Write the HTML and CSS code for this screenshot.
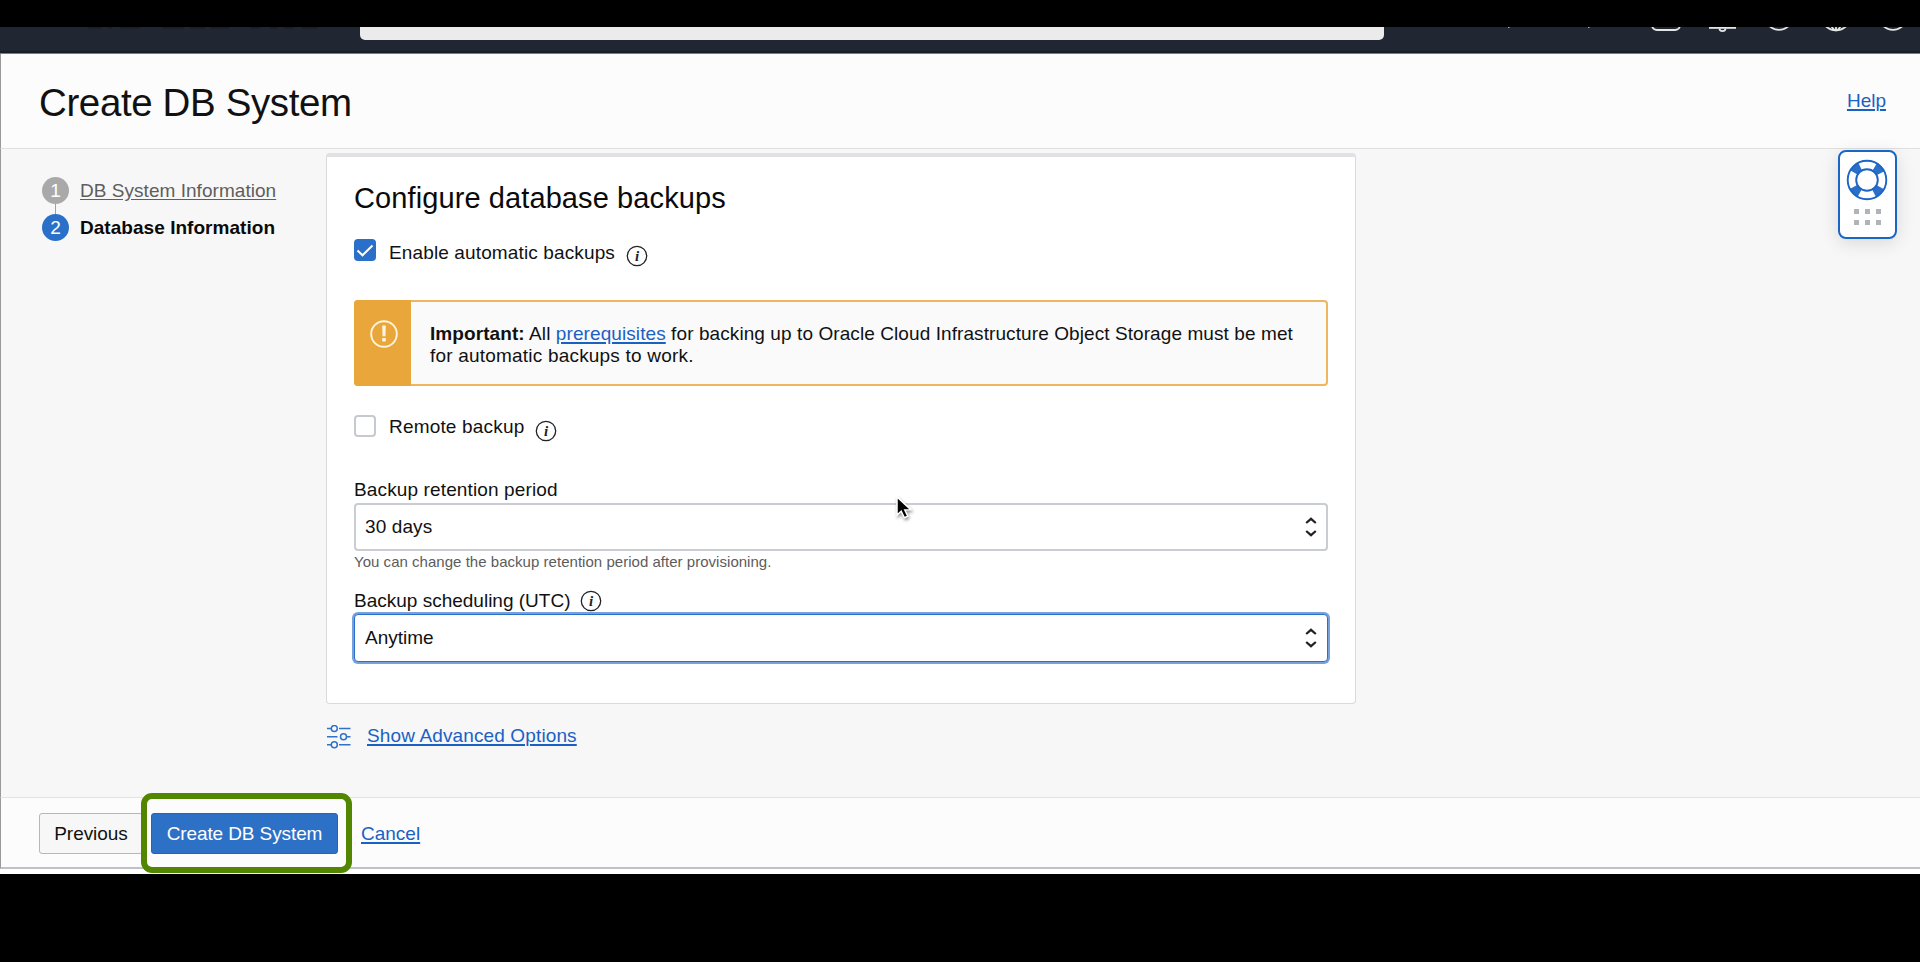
FILE: index.html
```html
<!DOCTYPE html>
<html lang="en">
<head>
<meta charset="utf-8">
<title>Create DB System</title>
<link rel="stylesheet" href="styles.css">
</head>
<body>
<div class="window">
  <nav class="topnav">
    <svg class="nav-logo" width="260" height="2" viewBox="80 0 260 2" fill="none" stroke="#191d26" stroke-width="2"><path d="M88 .5h14M108 .5h4M120 .5h20M162 .5h22M190 .5h15M210 .5h19M250 .5h10M270 .5h8M284 .5h10M302 .5h16"/></svg>
    <div class="search"></div>
    <svg class="nav-icons" width="420" height="10" viewBox="1500 27 420 10" fill="none" stroke="#e4e5e6" stroke-width="1.8">
      <path d="M1508 27.500h1.500M1588 27.500h1.500" stroke-width="1" stroke="#aaa"/>
      <rect x="1652" y="6" width="28" height="24" rx="5"/>
      <path d="M1709 27.800h27" stroke-width="2"/>
      <path d="M1719.500 28.500a3 2.600 0 0 0 6 0"/>
      <circle cx="1779" cy="15.500" r="14.300"/>
      <circle cx="1836" cy="15.500" r="14.800"/>
      <ellipse cx="1836" cy="15.500" rx="6.500" ry="14.800"/>
      <path d="M1836 20v10"/>
      <circle cx="1893" cy="15.500" r="14.300"/>
    </svg>
  </nav>
  <header class="header">
    <h1 class="title">Create DB System</h1>
    <a class="link help">Help</a>
  </header>
  <main class="content">
    <ol class="steps">
      <li class="step"><span class="dot">1</span><a class="step-link">DB System Information</a></li>
      <li class="step current"><span class="dot">2</span><span class="step-name">Database Information</span></li>
    </ol>
    <div class="form">
      <section class="card">
        <h2 class="card-title">Configure database backups</h2>
        <div class="check-row">
          <span class="checkbox checked"><svg width="22" height="22" viewBox="0 0 22 22" fill="none" stroke="#fff" stroke-width="2"><path d="M3.500 11.500l5 4.800L18.500 6.500"/></svg></span>
          <span class="enable-text">Enable automatic backups</span>
          <svg class="info" width="22" height="22" viewBox="0 0 22 22"><circle cx="11" cy="11" r="9.700" fill="none" stroke="#222" stroke-width="1.300"/><text x="11" y="15.800" class="info-i">i</text></svg>
        </div>
        <div class="alert">
          <div class="alert-icon"><svg width="28" height="28" viewBox="0 0 28 28"><circle cx="14" cy="14" r="12.800" fill="none" stroke="#fdf3df" stroke-width="1.900"/><path d="M12.200 5.500h3.600l-.3 10.700h-3zM12.200 18h3.600v3.400h-3.600z" fill="#fdf3df"/></svg></div>
          <p class="alert-text"><b>Important:</b> All <a class="link">prerequisites</a> for backing up to Oracle Cloud Infrastructure Object Storage must be met<br><span class="alert-rest">for automatic backups to work.</span></p>
        </div>
        <div class="check-row remote">
          <span class="checkbox"></span>
          <span class="remote-text">Remote backup</span>
          <svg class="info" width="22" height="22" viewBox="0 0 22 22"><circle cx="11" cy="11" r="9.700" fill="none" stroke="#222" stroke-width="1.300"/><text x="11" y="15.800" class="info-i">i</text></svg>
        </div>
        <div class="label retention">Backup retention period</div>
        <div class="select"><span class="days">30 days</span><svg width="12" height="22" viewBox="0 0 12 22" fill="none" stroke="#222" stroke-width="2.200"><path d="M1.200 7L6 2.800 10.800 7M1.200 15L6 19.200l4.800-4.200"/></svg></div>
        <div class="hint">You can change the backup retention period after provisioning.</div>
        <div class="label schedule"><span>Backup scheduling (UTC)</span>
          <svg width="22" height="22" viewBox="0 0 22 22"><circle cx="11" cy="11" r="9.700" fill="none" stroke="#222" stroke-width="1.300"/><text x="11" y="15.800" class="info-i">i</text></svg>
        </div>
        <div class="select focused"><span>Anytime</span><svg width="12" height="22" viewBox="0 0 12 22" fill="none" stroke="#222" stroke-width="2.200"><path d="M1.200 7L6 2.800 10.800 7M1.200 15L6 19.200l4.800-4.200"/></svg></div>
      </section>
      <div class="advanced">
        <svg width="24" height="24" viewBox="0 0 24 24" fill="none" stroke="#2e72c9" stroke-width="1.500"><path d="M0 3.500h4M12 3.500h11.500M0 11.700h10.500M19.500 11.700h4M0 19.700h4M12 19.700h11.500"/><circle cx="7.300" cy="3.500" r="3"/><circle cx="16.500" cy="11.700" r="3"/><circle cx="7.300" cy="19.700" r="3"/></svg>
        <a class="link">Show Advanced Options</a>
      </div>
    </div>
  </main>
  <footer class="footer">
    <button class="btn previous">Previous</button>
    <div class="highlighted">
      <button class="btn create">Create DB System</button>
      <span class="highlight"></span>
    </div>
    <a class="link cancel">Cancel</a>
  </footer>
  <div class="bottom-strip"></div>
</div>
<aside class="support">
  <svg width="42" height="42" viewBox="0 0 42 42">
    <g fill="none" stroke="#2b70c8">
      <circle cx="21" cy="21" r="15" stroke-width="9" stroke-dasharray="8.600 14.962" stroke-dashoffset="-7.480"/>
      <circle cx="21" cy="21" r="19.300" stroke="#1b65c4" stroke-width="1.900"/>
      <circle cx="21" cy="21" r="10.800" stroke="#1b65c4" stroke-width="1.900"/>
    </g>
  </svg>
  <div class="grip"><i></i><i></i><i></i><i></i><i></i><i></i></div>
</aside>
<svg class="cursor" width="20" height="28" viewBox="0 0 20 28"><path d="M2 2v18l4.200-3.700 3.200 6.500 3.400-1.600-3-6.200 6-.3z" fill="#000" stroke="#fff" stroke-width="1.500"/></svg>
</body>
</html>
```

FILE: styles.css
```css
* { box-sizing: border-box; }
body {
  margin: 0;
  width: 1920px;
  height: 962px;
  padding-top: 27px;
  background: #000;
  color: #111;
  font: 19px/22px "Liberation Sans", Arial, sans-serif;
  position: relative;
  overflow: hidden;
}
.window { display: flex; flex-direction: column; height: 847px; background: #fff; }
.topnav {
  display: flex;
  height: 27px;
  flex: none;
  padding-left: 80px;
  background: #212732;
  border-bottom: 1px solid #777b82;
  box-shadow: inset 0 -2px 0 #191e2b;
}
.nav-logo { display: block; margin-right: 20px; }
.search { width: 1024px; height: 13px; background: #ebebeb; border-radius: 0 0 5px 5px; }
.nav-icons { display: block; margin-left: auto; }
.header {
  display: flex;
  flex: none;
  justify-content: space-between;
  height: 95px;
  padding: 27px 34px 0 38px;
  background: #fcfcfc;
  border-left: 1px solid #999;
  border-bottom: 1px solid #e0e0e0;
}
.title { margin: 0; font-size: 38.500px; line-height: 44px; font-weight: 400; letter-spacing: -.38px; }
.link { color: #1a61c4; text-decoration: underline; text-decoration-thickness: 1.500px; text-underline-offset: 2px; }
.help { margin-top: 9px; }
.content { display: flex; height: 648px; flex: none; background: #f7f7f7; border-left: 1px solid #999; }
.steps { list-style: none; margin: 0; padding: 28px 0 0 41px; width: 325px; display: flex; flex-direction: column; gap: 10px; }
.step { display: flex; gap: 11px; height: 27px; align-items: center; }
.dot {
  width: 27px;
  height: 27px;
  border-radius: 50%;
  background: #a9a9a9;
  color: #fff;
  text-align: center;
  line-height: 28px;
  position: relative;
}
.step:first-child .dot::after { content: ""; position: absolute; left: 13px; top: 27px; width: 1px; height: 10px; background: #a0a0a0; }
.current .dot { background: #2b70c8; }
.step-link { padding-top: 1px; color: #5e5e5e; text-decoration: underline; text-underline-offset: 2px; letter-spacing: .04px; }
.step-name { padding-top: 1px; font-weight: 700; color: #0a0a0a; letter-spacing: .04px; }
.form { width: 1030px; padding-top: 4px; }
.card {
  height: 551px;
  padding: 24px 27px 0;
  background: #fff;
  border: 1px solid #d9dadc;
  border-top: 4px solid #dfe1e5;
  border-radius: 4px;
}
.card-title { margin: 0; font-size: 29px; line-height: 34px; font-weight: 400; color: #0a0a0a; letter-spacing: .1px; }
.check-row { display: flex; align-items: flex-start; height: 30px; margin-top: 24px; }
.checkbox { width: 22px; height: 22px; margin-right: 13px; border: 2px solid #c6c9ce; border-radius: 4px; background: #fff; }
.checked { border: 0; background: #2b70c8; }
.checkbox svg { display: block; }
.enable-text { padding-top: 3px; letter-spacing: .13px; }
.remote-text { padding-top: 1px; letter-spacing: .18px; }
.info { margin: 6px 0 0 11px; }
.remote .info { margin-top: 5px; }
.info-i { font: italic 700 15px "Liberation Serif", serif; text-anchor: middle; fill: #222; }
.alert {
  display: flex;
  height: 86px;
  margin-top: 31px;
  background: #fafafa;
  border: 2px solid #edb65f;
  border-radius: 4px;
}
.alert-icon { width: 57px; margin: -2px 0 -2px -2px; padding: 20px 0 0 16px; background: #e9a73b; border-radius: 4px 0 0 4px; }
.alert-text { margin: 0; padding: 21px 0 0 19px; white-space: nowrap; letter-spacing: .085px; }
.alert-rest { letter-spacing: .2px; }
.remote { margin-top: 29px; }
.label { height: 24px; }
.retention { margin-top: 34px; letter-spacing: .13px; }
.select {
  display: flex;
  align-items: center;
  justify-content: space-between;
  height: 48px;
  padding: 0 9px;
  border: 2px solid #c9ccd0;
  border-radius: 4px;
  background: #fff;
}
.days { letter-spacing: .1px; }
.focused { border: 1px solid #2b70c8; padding: 0 10px; box-shadow: 0 0 0 2px #76a1dc; }
.hint { margin-top: 2px; height: 18px; font-size: 15px; line-height: 18px; color: #5c5c5c; letter-spacing: .03px; }
.schedule { display: flex; gap: 10px; margin-top: 19px; }
.advanced { display: flex; gap: 16px; margin: 21px 0 0 1px; letter-spacing: .13px; }
.footer {
  display: flex;
  flex: none;
  height: 72px;
  padding: 15px 0 0 38px;
  background: #fcfcfc;
  border: solid #e3e3e3;
  border-width: 1px 0 2px 1px;
  border-left-color: #999;
  border-bottom-color: #bfc1c8;
}
.btn { height: 41px; padding: 0 14px; border: 1px solid #b4b8be; border-radius: 3px; background: #f7f7f7; font: inherit; color: #111; white-space: nowrap; }
.previous { width: 104px; letter-spacing: -.05px; }
.highlighted { position: relative; margin-left: 8px; }
.create { width: 187px; border-color: #1f66c2; background: #2d71c7; color: #fff; letter-spacing: -.1px; }
.highlight { position: absolute; left: -10px; top: -20px; width: 211px; height: 80px; border: 6px solid #528600; border-radius: 11px; }
.cancel { margin: 10px 0 0 23px; }
.support {
  position: absolute;
  left: 1838px;
  top: 150px;
  width: 59px;
  height: 89px;
  padding: 7px 0 0 6px;
  border: 2.500px solid #1b65c4;
  border-radius: 8px;
  background: #fff;
  box-shadow: 0 4px 18px rgba(0, 0, 0, .12);
}
.support svg { display: block; }
.grip { display: grid; grid-template-columns: repeat(3, 5px); gap: 6px; margin: 8px 0 0 8px; }
.grip i { height: 5px; background: #b0b4b9; }
.cursor { position: absolute; left: 895px; top: 495px; filter: drop-shadow(1px 2px 1.500px rgba(0, 0, 0, .4)); }
```
